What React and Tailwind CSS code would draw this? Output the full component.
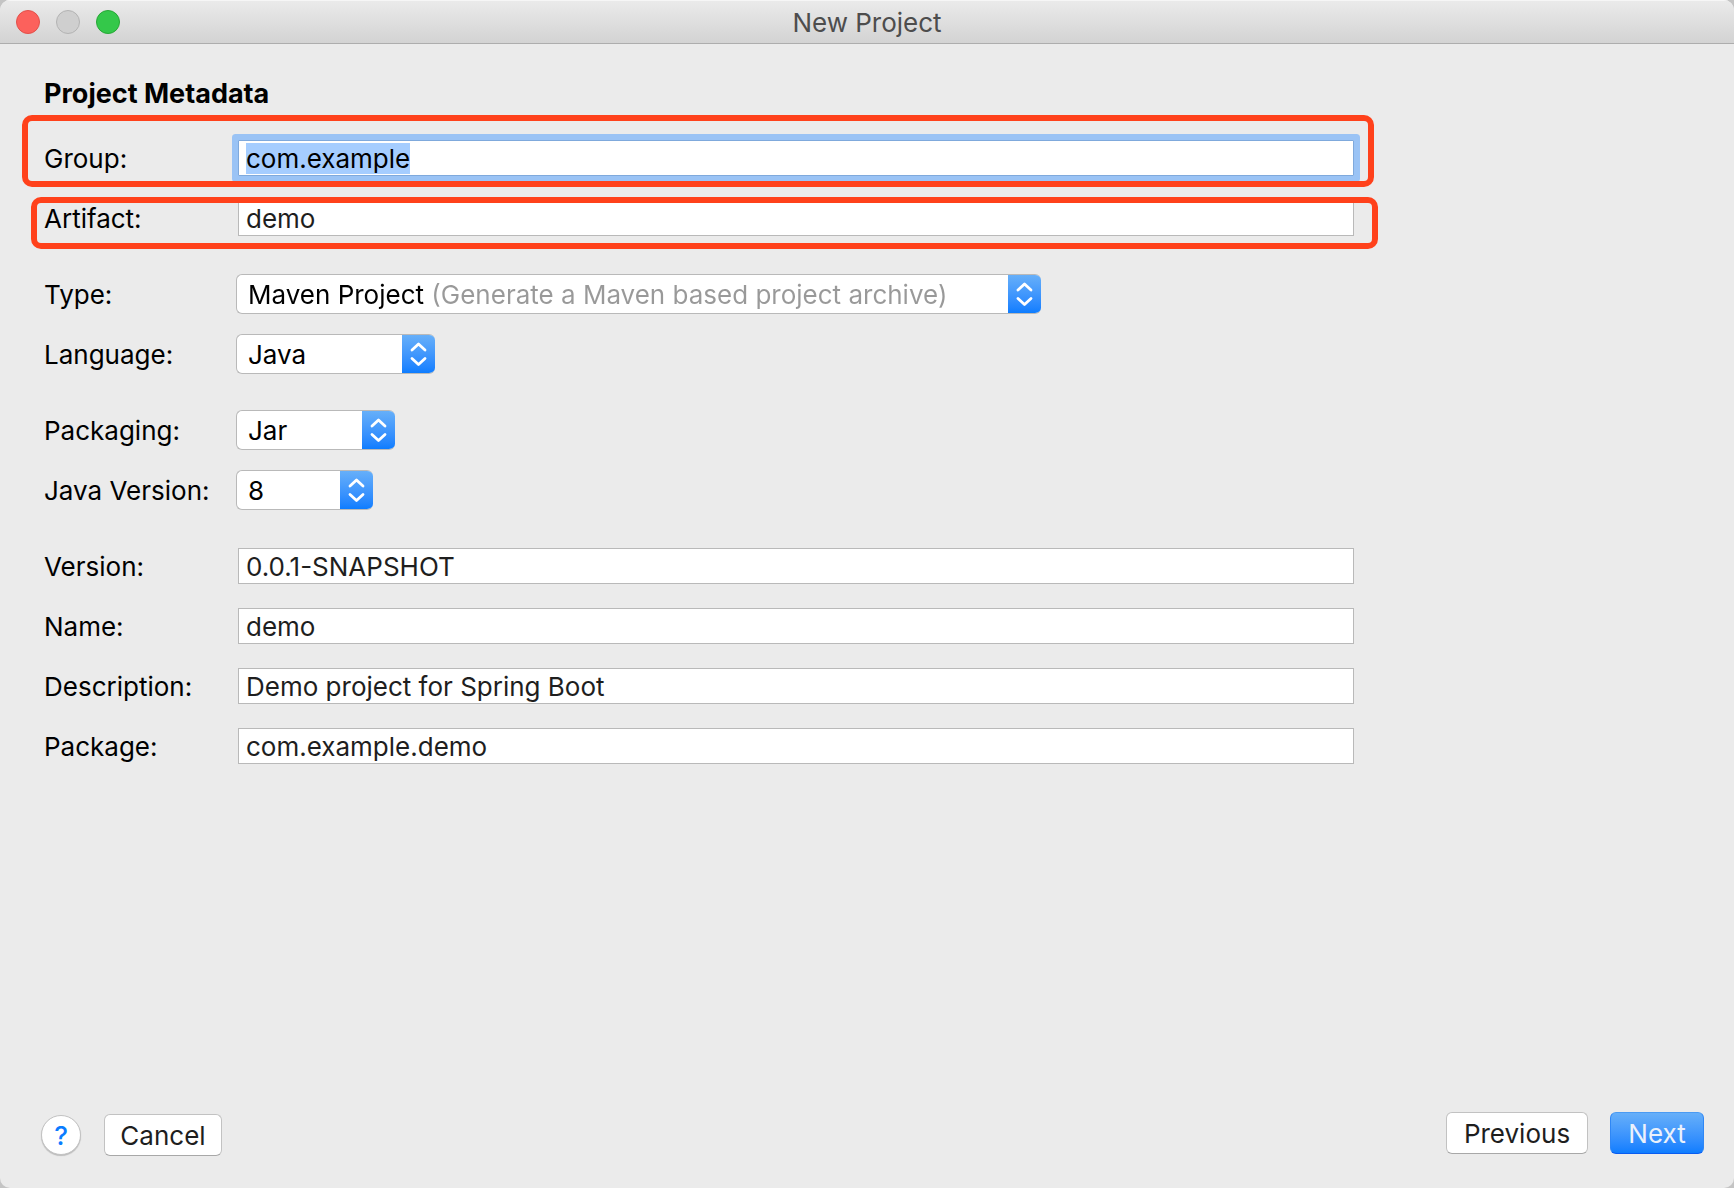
import { useEffect, useRef } from 'react'
import clsx from 'clsx'

function Highlight({ className }) {
  return (
    <div
      className={clsx(
        'absolute pointer-events-none rounded-[10px] border-[6px] border-[#ff411b]',
        className
      )}
    />
  )
}

function Row({ id, label, children }) {
  return (
    <div className="relative flex h-10 items-center">
      <label htmlFor={id} className="w-48 shrink-0 whitespace-nowrap">
        {label}
      </label>
      {children}
    </div>
  )
}

function TextField({ id, value, focused }) {
  const ref = useRef(null)

  useEffect(() => {
    if (focused) {
      ref.current.focus()
      ref.current.select()
    }
  }, [focused])

  return (
    <input
      ref={ref}
      id={id}
      type="text"
      defaultValue={value}
      spellCheck={false}
      className="ml-0.5 h-9 min-w-0 flex-1 border border-[#b9b9b9] bg-white px-[7px] pt-px leading-8 text-[#1e1e1e] outline-none selection:bg-[#a5cdff] selection:text-black focus:rounded-[1px] focus:border-[#7fa9dc] focus:ring-6 focus:ring-[#9ac3f5]"
    />
  )
}

function SelectField({ id, options, className, textClassName = 'text-black' }) {
  return (
    <div
      className={clsx(
        'relative flex h-10 overflow-hidden rounded-md border border-r-0 border-[#b9b9b9] bg-white',
        className
      )}
    >
      <select
        id={id}
        className={clsx(
          'h-full w-full appearance-none pl-[11px] pr-9 outline-none',
          textClassName
        )}
      >
        {options.map((option) => (
          <option key={option}>{option}</option>
        ))}
      </select>
      <span className="pointer-events-none absolute -inset-y-px right-0 flex w-[33px] items-center justify-center border-y border-t-[#4a9bf3] border-b-[#0a68f0] bg-linear-to-b from-[#66aff9] to-[#0c7dff]">
        <svg width="17" height="26" viewBox="0 0 17 26" fill="none" stroke="white" strokeWidth="2.8" strokeLinecap="round" strokeLinejoin="round">
          <path d="M2 9 8.5 3 15 9M2 17.500 8.500 23.500 15 17.500" />
        </svg>
      </span>
    </div>
  )
}

function App() {
  return (
    <div className="bg-[#c4c4c4] font-['Inter',sans-serif] text-[26px] text-black">
      <div className="flex min-h-screen flex-col overflow-hidden rounded-[10px] bg-[#ebebeb]">
        {/* Title bar */}
        <header className="relative flex h-11 items-center justify-center border-b border-[#adadad] bg-linear-to-b from-[#ebebeb] to-[#d3d3d3] shadow-[inset_0_1px_0_#f6f6f6]">
          <div className="absolute left-4 flex gap-4">
            <button aria-label="Close" className="size-6 rounded-full border border-[#e2504a] bg-[#fc615c]" />
            <button aria-label="Minimize" className="size-6 rounded-full border border-[#b3b3b3] bg-[#cfcfcf]" />
            <button aria-label="Zoom" className="size-6 rounded-full border border-[#27a736] bg-[#34c84a]" />
          </div>
          <h1 className="pt-0.5 text-[#4d4d4d]">New Project</h1>
        </header>

        {/* Form */}
        <main className="flex-1 pl-11 pr-[380px] pt-[30px]">
          <h2 className="mb-6 text-[27px] font-bold leading-10">Project Metadata</h2>
          <form className="flex flex-col gap-9">
            <div className="flex flex-col gap-5">
              <Row id="group" label="Group:">
                <TextField id="group" value="com.example" focused />
                <Highlight className="-left-[22px] -right-5 -top-[23px] -bottom-[9px]" />
              </Row>
              <Row id="artifact" label="Artifact:">
                <TextField id="artifact" value="demo" />
                <Highlight className="-left-[13px] -right-6 -top-px -bottom-[11px]" />
              </Row>
            </div>

            <div className="flex flex-col gap-5">
              <Row id="type" label="Type:">
                <SelectField
                  id="type"
                  options={['Maven Project (Generate a Maven based project archive)']}
                  className="w-[805px]"
                  textClassName="bg-linear-to-r from-black from-[191px] to-[#999] to-[191px] bg-clip-text text-transparent"
                />
              </Row>
              <Row id="language" label="Language:">
                <SelectField id="language" options={['Java', 'Kotlin', 'Groovy']} className="w-[199px]" />
              </Row>
            </div>

            <div className="flex flex-col gap-5">
              <Row id="packaging" label="Packaging:">
                <SelectField id="packaging" options={['Jar', 'War']} className="w-[159px]" />
              </Row>
              <Row id="java-version" label="Java Version:">
                <SelectField id="java-version" options={['8', '11']} className="w-[137px]" />
              </Row>
            </div>

            <div className="flex flex-col gap-5">
              <Row id="version" label="Version:">
                <TextField id="version" value="0.0.1-SNAPSHOT" />
              </Row>
              <Row id="name" label="Name:">
                <TextField id="name" value="demo" />
              </Row>
              <Row id="description" label="Description:">
                <TextField id="description" value="Demo project for Spring Boot" />
              </Row>
              <Row id="package" label="Package:">
                <TextField id="package" value="com.example.demo" />
              </Row>
            </div>
          </form>
        </main>

        {/* Footer */}
        <footer className="flex items-end justify-between pb-8 pl-[41px] pr-[30px] text-[#1e1e1e]">
          <div className="flex items-center gap-[23px]">
            <button
              aria-label="Help"
              className="flex size-10 items-center justify-center rounded-full border border-[#c2c2c2] bg-white font-medium text-[#0a7cff] shadow-[0_1px_1px_#00000033]"
            >
              ?
            </button>
            <button className="h-[42px] w-[118px] rounded-md border border-[#c2c2c2] border-b-[#a8a8a8] bg-white">
              Cancel
            </button>
          </div>
          <div className="flex gap-[22px] pb-0.5">
            <button className="h-[42px] w-[142px] rounded-md border border-[#c2c2c2] border-b-[#a8a8a8] bg-white">
              Previous
            </button>
            <button className="h-[42px] w-[94px] rounded-md border border-[#2f87f5] border-t-[#4a9bf3] border-b-[#0a5cf0] bg-linear-to-b from-[#66aff9] to-[#0c7dff] text-[#ebf1fb]">
              Next
            </button>
          </div>
        </footer>
      </div>
    </div>
  )
}

export default App
